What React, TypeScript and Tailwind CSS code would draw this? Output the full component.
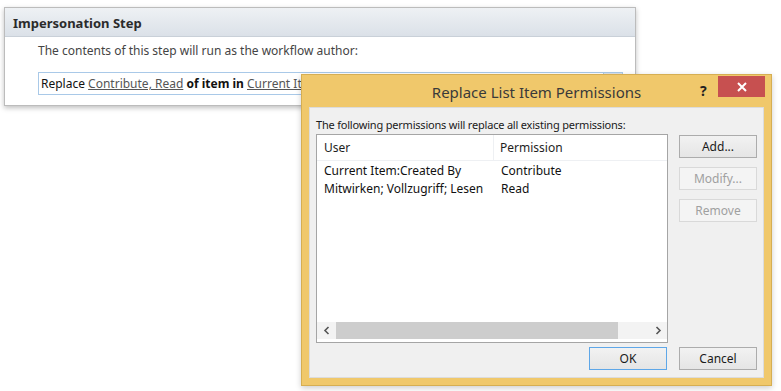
import React from 'react';

const font = { fontFamily: '"Noto Sans", "Open Sans", sans-serif' };

const SideButton = ({ label, disabled }: { label: string; disabled?: boolean }) => (
  <div
    className={`flex h-[23px] w-[78px] items-center justify-center border text-[12px] ${
      disabled
        ? 'border-[#d9d9d9] bg-[#f4f4f4] text-[#a0a0a0]'
        : 'border-[#acacac] bg-gradient-to-b from-[#f2f2f2] to-[#e5e5e5] text-[#1a1a1a]'
    }`}
  >
    {label}
  </div>
);

const rows = [
  { user: 'Current Item:Created By', perm: 'Contribute' },
  { user: 'Mitwirken; Vollzugriff; Lesen', perm: 'Read' },
];

export default function App() {
  return (
    <div className="relative h-[391px] w-[781px] overflow-hidden bg-white" style={font}>
      {/* workflow step panel */}
      <div className="ml-[4px] mt-[7px] h-[99px] w-[632px] border border-[#bcbcbc] bg-white shadow-[0_2px_5px_rgba(0,0,0,0.25)]">
        <div className="flex h-[29px] items-center border-b border-[#c9d0d8] bg-gradient-to-b from-[#eef1f4] to-[#dbe1e8] pl-[8px] pt-[3px]">
          <span className="text-[13px] font-bold text-[#2b2b2b]">Impersonation Step</span>
        </div>
        <div className="pl-[33px] pr-[12px]">
          <div className="mt-[5px] text-[12px] leading-[18px] text-[#444]">
            The contents of this step will run as the workflow author:
          </div>
          <div className="mt-[12px] flex h-[23px] items-center border border-[#a9c9e8] pl-[2px]">
            <div className="flex-1 whitespace-nowrap text-[12px] text-[#111]">
              Replace{' '}
              <span className="text-[#555] underline">Contribute, Read</span>{' '}
              <span className="font-bold">of item in</span>{' '}
              <span className="text-[#555] underline">Current Item</span>
            </div>
            <div className="h-[21px] w-[19px] border-l border-[#a9c9e8] bg-[#dde3ea]" />
          </div>
        </div>
      </div>

      {/* dialog */}
      <div className="absolute left-[301px] top-[74px] flex h-[312px] w-[471px] flex-col border border-[#d6ae52] bg-[#f0c86b] shadow-[0_2px_6px_rgba(0,0,0,0.2)]">
        <div className="relative flex h-[32px] items-center justify-center">
          <span className="pt-[2px] text-[15px] text-[#3a3a3a]">Replace List Item Permissions</span>
          <span className="absolute left-[398px] top-[5px] text-[14px] font-bold text-[#222]">?</span>
          <div className="absolute left-[416px] top-[1px] flex h-[21px] w-[47px] items-center justify-center bg-[#c75050]">
            <svg width="10" height="10" viewBox="0 0 10 10">
              <path d="M1 1 L9 9 M9 1 L1 9" stroke="white" strokeWidth="2" />
            </svg>
          </div>
        </div>

        <div className="mx-[7px] flex h-[271px] flex-col border border-[#dcdcdc] bg-[#f0f0f0] px-[6px] pt-[9px]">
          <div className="text-[11px] leading-[15px] tracking-[-0.2px] text-[#1a1a1a]">
            The following permissions will replace all existing permissions:
          </div>
          <div className="mt-[2px] flex">
            <div className="flex h-[209px] w-[352px] flex-col border border-[#a5a5a5] bg-white">
              <div className="flex h-[26px] border-b border-[#eef0f3] text-[12px] text-[#1e1e1e]">
                <div className="flex w-[177px] items-center border-r border-[#eef0f3] pl-[7px]">User</div>
                <div className="flex items-center pl-[6px]">Permission</div>
              </div>
              <div className="flex-1 pt-[1px]">
                {rows.map((r) => (
                  <div key={r.user} className="flex h-[18px] items-center text-[12px] text-[#111]">
                    <div className="w-[177px] pl-[7px]">{r.user}</div>
                    <div className="pl-[7px]">{r.perm}</div>
                  </div>
                ))}
              </div>
              <div className="mb-[3px] flex h-[17px] items-center bg-[#f3f3f3]">
                <div className="flex w-[19px] items-center justify-center">
                  <svg width="7" height="9" viewBox="0 0 7 9">
                    <path d="M5.5 1 L2 4.5 L5.5 8" stroke="#555" strokeWidth="1.6" fill="none" />
                  </svg>
                </div>
                <div className="h-[17px] w-[282px] bg-[#cdcdcd]" />
                <div className="flex flex-1 items-center justify-end pr-[5px]">
                  <svg width="7" height="9" viewBox="0 0 7 9">
                    <path d="M1.5 1 L5 4.5 L1.5 8" stroke="#555" strokeWidth="1.6" fill="none" />
                  </svg>
                </div>
              </div>
            </div>
            <div className="ml-[11px] mt-[1px] flex flex-col gap-[9px]">
              <SideButton label="Add..." />
              <SideButton label="Modify..." disabled />
              <SideButton label="Remove" disabled />
            </div>
          </div>
          <div className="mt-[4px] flex justify-end gap-[12px]">
            <div className="flex h-[23px] w-[78px] items-center justify-center border border-[#5ea7e8] bg-gradient-to-b from-[#f2f2f2] to-[#e5e5e5] text-[12px] text-[#1a1a1a]">
              OK
            </div>
            <SideButton label="Cancel" />
          </div>
        </div>
      </div>
    </div>
  );
}
